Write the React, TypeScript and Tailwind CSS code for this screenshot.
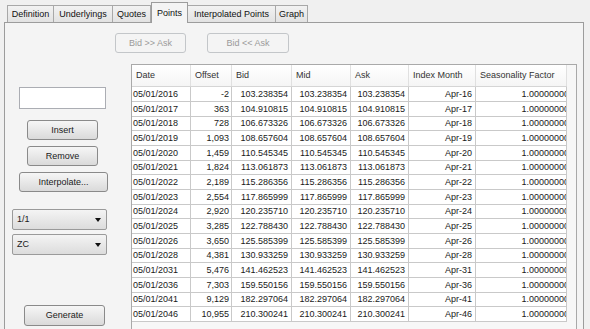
import React from "react";

// Points 标签页：左侧操作区 + 右侧曲线点表格

const rows: [string, string, string, string][] = [
  ["05/01/2016", "-2", "103.238354", "Apr-16"],
  ["05/01/2017", "363", "104.910815", "Apr-17"],
  ["05/01/2018", "728", "106.673326", "Apr-18"],
  ["05/01/2019", "1,093", "108.657604", "Apr-19"],
  ["05/01/2020", "1,459", "110.545345", "Apr-20"],
  ["05/01/2021", "1,824", "113.061873", "Apr-21"],
  ["05/01/2022", "2,189", "115.286356", "Apr-22"],
  ["05/01/2023", "2,554", "117.865999", "Apr-23"],
  ["05/01/2024", "2,920", "120.235710", "Apr-24"],
  ["05/01/2025", "3,285", "122.788430", "Apr-25"],
  ["05/01/2026", "3,650", "125.585399", "Apr-26"],
  ["05/01/2028", "4,381", "130.933259", "Apr-28"],
  ["05/01/2031", "5,476", "141.462523", "Apr-31"],
  ["05/01/2036", "7,303", "159.550156", "Apr-36"],
  ["05/01/2041", "9,129", "182.297064", "Apr-41"],
  ["05/01/2046", "10,955", "210.300241", "Apr-46"],
];

const tabs = [
  { label: "Definition", w: "w-[47px]" },
  { label: "Underlyings", w: "w-[59px]" },
  { label: "Quotes", w: "w-[38px]" },
  { label: "Points", w: "w-[37px]", active: true },
  { label: "Interpolated Points", w: "w-[88px]" },
  { label: "Graph", w: "w-[32px]" },
];

const cols = ["w-[59px]", "w-[41px]", "w-[60px]", "w-[59px]", "w-[58px]", "w-[67px]", "w-[91px]"];
const headers = ["Date", "Offset", "Bid", "Mid", "Ask", "Index Month", "Seasonality Factor"];

function WinButton({ label, className, disabled }: { label: string; className: string; disabled?: boolean }) {
  return (
    <div
      className={`flex items-center justify-center rounded-[3px] border ${
        disabled
          ? "border-[#c3c6c9] bg-[#f4f4f4] text-[#9a9a9a]"
          : "border-[#8a8a8a] bg-gradient-to-b from-[#f6f6f6] to-[#dadada] text-[#1a1a1a]"
      } ${className}`}
    >
      {label}
    </div>
  );
}

function Combo({ label, className }: { label: string; className: string }) {
  return (
    <div
      className={`flex h-[21px] w-[95px] items-center justify-between rounded-[2px] border border-[#9a9a9a] bg-gradient-to-b from-[#f4f4f4] to-[#dcdcdc] pl-[4px] pr-[5px] text-[#1a1a1a] ${className}`}
    >
      <span>{label}</span>
      <svg width="6" height="4" viewBox="0 0 6 4">
        <path d="M0 0h6L3 4z" fill="#111" />
      </svg>
    </div>
  );
}

export default function App() {
  return (
    <div className="h-[329px] w-[590px] overflow-hidden bg-[#f0f0f0] font-['Liberation_Sans',Arial,sans-serif] text-[9px] leading-none">
      {/* tabs */}
      <div className="flex h-[22px] items-end pl-[7px]">
        {tabs.map((t) =>
          t.active ? (
            <div
              key={t.label}
              className={`relative z-10 -mb-px flex h-[21px] items-center justify-center border border-b-0 border-[#9c9c9c] bg-[#f4f4f4] text-[#111] ${t.w}`}
            >
              {t.label}
            </div>
          ) : (
            <div
              key={t.label}
              className={`flex h-[17px] items-center justify-center border border-b-0 border-l-0 border-[#a8a8a8] bg-gradient-to-b from-[#f2f2f2] to-[#e2e2e2] pt-px text-[#111] first:border-l ${t.w}`}
            >
              {t.label}
            </div>
          )
        )}
      </div>

      {/* panel */}
      <div className="ml-[4px] h-[310px] w-[580px] border border-b-0 border-[#9c9c9c] bg-[#f4f4f4]">
        <div className="flex gap-[21px] pl-[110px] pt-[10px]">
          <WinButton label="Bid >> Ask" className="h-[20px] w-[71px]" disabled />
          <WinButton label="Bid << Ask" className="h-[20px] w-[82px]" disabled />
        </div>

        <div className="mt-[11px] flex">
          {/* left controls */}
          <div className="flex w-[126px] flex-col">
            <div className="ml-[14px] mt-[23px] h-[22px] w-[87px] border border-[#abadb3] bg-white" />
            <WinButton label="Insert" className="ml-[22px] mt-[11px] h-[20px] w-[71px]" />
            <WinButton label="Remove" className="ml-[22px] mt-[6px] h-[20px] w-[71px]" />
            <WinButton label="Interpolate..." className="ml-[14px] mt-[6px] h-[20px] w-[89px]" />
            <Combo label="1/1" className="ml-[7px] mt-[17px]" />
            <Combo label="ZC" className="ml-[7px] mt-[4px]" />
            <WinButton label="Generate" className="ml-[19px] mt-[50px] h-[21px] w-[81px]" />
          </div>

          {/* table */}
          <div className="h-[270px] w-[446px] border border-b-0 border-[#a9a9a9] bg-[#f7f7f7]">
            <div className="flex h-[22px] w-[435px] border-b border-[#d5d5d5] bg-gradient-to-b from-white to-[#f5f5f5]">
              {headers.map((h, i) => (
                <div
                  key={h}
                  className={`flex items-center border-r border-[#e0e0e0] pl-[4px] text-[#333] ${cols[i]}`}
                >
                  {h}
                </div>
              ))}
            </div>
            {rows.map(([date, off, px, month], r) => (
              <div
                key={date}
                className={`flex w-[435px] bg-white text-[#1a1a1a] ${r % 3 === 2 ? "h-[14px]" : "h-[15px]"}`}
              >
                <div className={`flex items-center overflow-hidden border-r border-b border-[#c9c9c9] pl-[1px] ${cols[0]}`}>
                  {date}
                </div>
                <div className={`flex items-center justify-end border-r border-b border-[#c9c9c9] pr-[2px] ${cols[1]}`}>
                  {off}
                </div>
                {[px, px, px].map((v, k) => (
                  <div
                    key={k}
                    className={`flex items-center justify-end border-r border-b border-[#c9c9c9] pr-[3px] ${cols[2 + k]}`}
                  >
                    {v}
                  </div>
                ))}
                <div className={`flex items-center justify-end border-r border-b border-[#c9c9c9] pr-[3px] ${cols[5]}`}>
                  {month}
                </div>
                <div className={`flex items-center justify-end overflow-hidden border-r border-b border-[#c9c9c9] ${cols[6]}`}>
                  <span className="-mr-[3px] whitespace-nowrap">1.00000000</span>
                </div>
              </div>
            ))}
          </div>
        </div>
      </div>
    </div>
  );
}
